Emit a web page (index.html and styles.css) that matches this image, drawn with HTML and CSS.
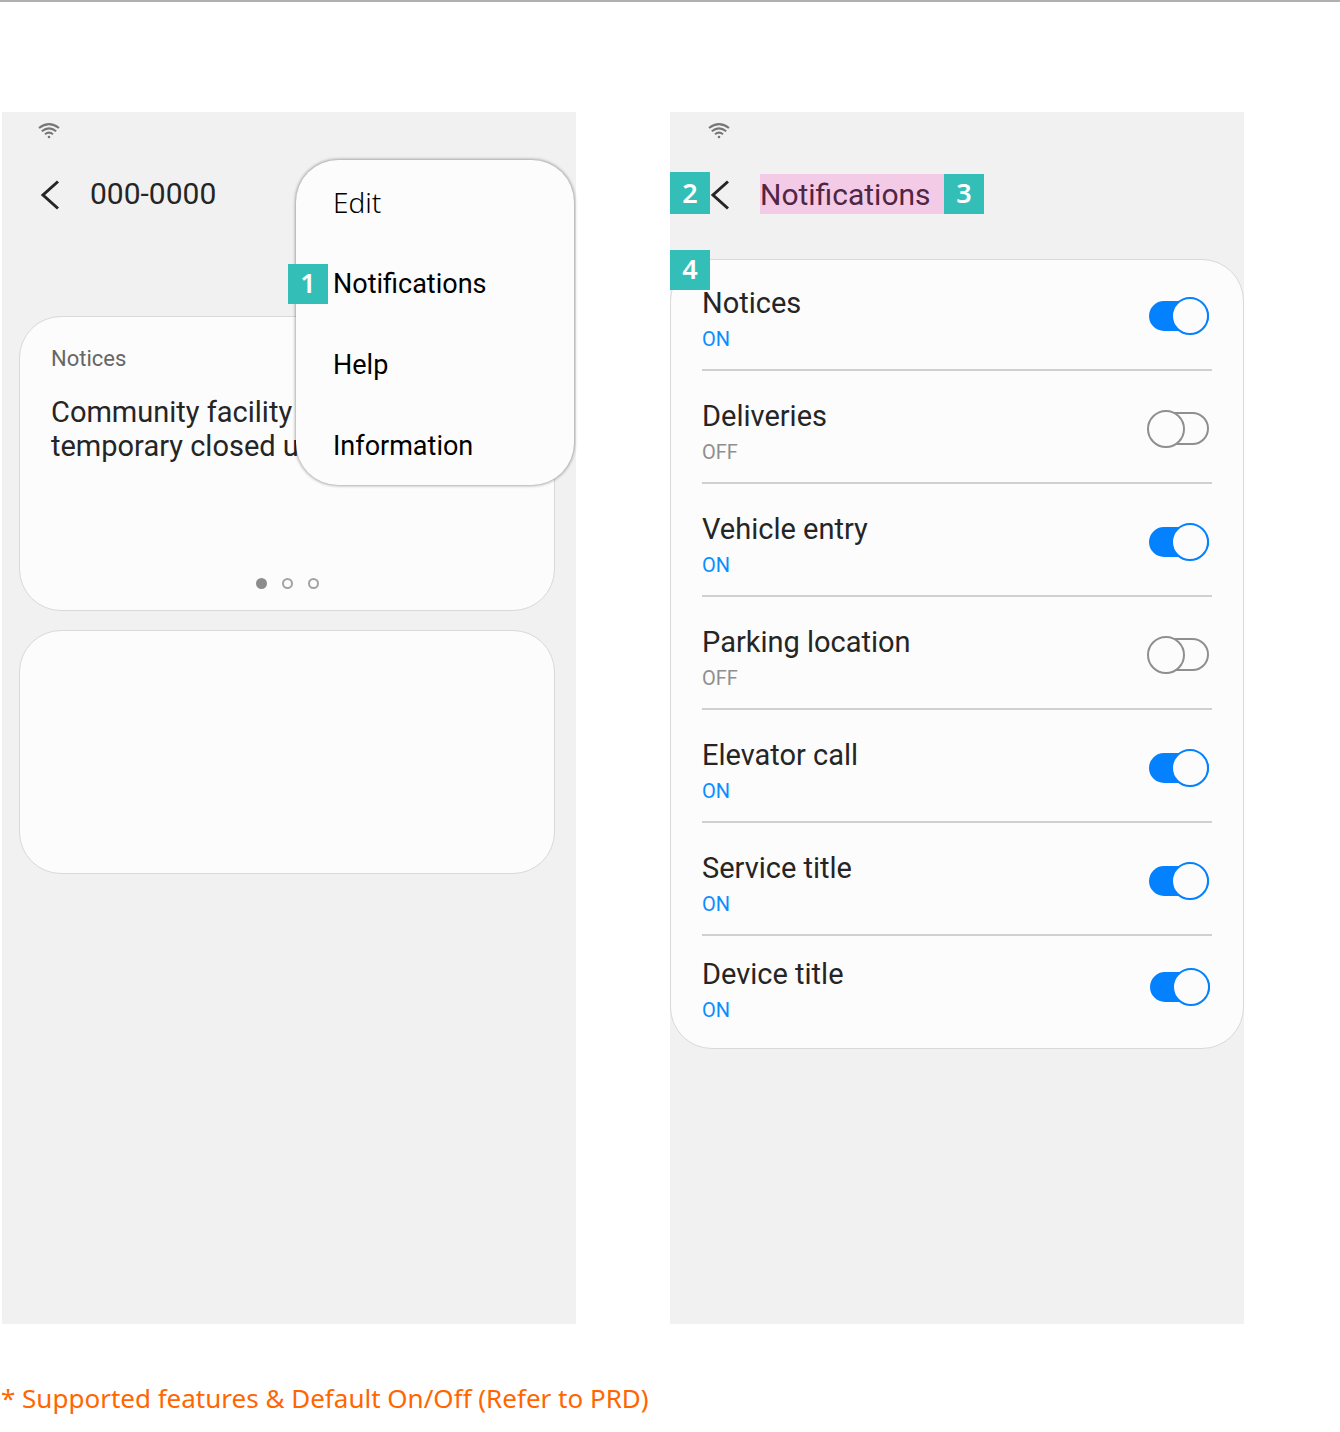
FILE: index.html
```html
<!DOCTYPE html>
<html lang="en">
<head>
<meta charset="utf-8">
<meta name="viewport" content="width=device-width, initial-scale=1">
<title>Notification settings</title>
<link rel="stylesheet" href="styles.css">
</head>
<body>
<main class="screens">
  <section class="phone" aria-label="Home menu">
    <div class="status">
      <svg class="wifi" viewBox="0 0 22 16" aria-hidden="true"><path d="M1 5Q11-2.8 21 5M3.8 8.2Q11 2.6 18.2 8.2M7 11.2Q11 8 15 11.2"/><circle cx="11" cy="14" r="1.3"/></svg>
    </div>
    <header class="appbar">
      <button class="back" type="button" aria-label="Back"><svg viewBox="0 0 20 30" aria-hidden="true"><path d="M19 1.5L4 15l15 13.5"/></svg></button>
      <h1 class="title">000-0000</h1>
    </header>
    <div class="cards">
      <article class="card card-notice">
        <h2 class="card-label">Notices</h2>
        <p class="card-text">Community facility<br>temporary closed u</p>
        <div class="dots"><span class="dot dot-current"></span><span class="dot"></span><span class="dot"></span></div>
      </article>
      <article class="card card-empty"></article>
    </div>
    <nav class="menu" aria-label="More options">
      <button class="menu-item menu-item-light" type="button">Edit</button>
      <button class="menu-item" type="button">Notifications<span class="badge badge-menu">1</span></button>
      <button class="menu-item" type="button">Help</button>
      <button class="menu-item" type="button">Information</button>
    </nav>
  </section>

  <section class="phone phone-settings" aria-label="Notifications">
    <div class="status">
      <svg class="wifi" viewBox="0 0 22 16" aria-hidden="true"><path d="M1 5Q11-2.8 21 5M3.8 8.2Q11 2.6 18.2 8.2M7 11.2Q11 8 15 11.2"/><circle cx="11" cy="14" r="1.3"/></svg>
    </div>
    <header class="appbar">
      <span class="badge badge-back">2</span>
      <button class="back" type="button" aria-label="Back"><svg viewBox="0 0 20 30" aria-hidden="true"><path d="M19 1.5L4 15l15 13.5"/></svg></button>
      <h1 class="title title-marked">Notifications</h1>
      <span class="badge">3</span>
    </header>
    <div class="settings">
      <span class="badge badge-list">4</span>
      <label class="row"><span class="row-text"><span class="row-name">Notices</span><span class="row-state on">ON</span></span><input class="switch" type="checkbox" checked></label>
      <label class="row"><span class="row-text"><span class="row-name">Deliveries</span><span class="row-state">OFF</span></span><input class="switch" type="checkbox"></label>
      <label class="row"><span class="row-text"><span class="row-name">Vehicle entry</span><span class="row-state on">ON</span></span><input class="switch" type="checkbox" checked></label>
      <label class="row"><span class="row-text"><span class="row-name">Parking location</span><span class="row-state">OFF</span></span><input class="switch" type="checkbox"></label>
      <label class="row"><span class="row-text"><span class="row-name">Elevator call</span><span class="row-state on">ON</span></span><input class="switch" type="checkbox" checked></label>
      <label class="row"><span class="row-text"><span class="row-name">Service title</span><span class="row-state on">ON</span></span><input class="switch" type="checkbox" checked></label>
      <label class="row"><span class="row-text"><span class="row-name">Device title</span><span class="row-state on">ON</span></span><input class="switch" type="checkbox" checked></label>
    </div>
  </section>
</main>
<p class="note">* Supported features &amp; Default On/Off (Refer to PRD)</p>
</body>
</html>
```
FILE: styles.css
```css
*, *::before, *::after { box-sizing: border-box; }

body {
  margin: 0;
  border-top: 2px solid #b0b0b0;
  background: #fff;
  color: #252525;
  font-family: Roboto, "Liberation Sans", sans-serif;
}

h1, h2, p { margin: 0; font-weight: 400; }

button {
  border: 0;
  padding: 0;
  background: none;
  color: inherit;
  font: inherit;
  text-align: left;
}

.screens {
  display: grid;
  grid-template-columns: 1fr 1fr;
  gap: 94px;
  padding: 110px 96px 0 2px;
}

.phone {
  position: relative;
  padding-bottom: 275px;
  background: #f1f1f1;
}

.status {
  height: 62px;
  padding: 11px 0 0 36px;
}

.wifi {
  display: block;
  width: 22px;
  height: 16px;
  fill: none;
  stroke: #777;
  stroke-width: 2;
}

.wifi circle { fill: #777; stroke: none; }

.appbar {
  position: relative;
  display: flex;
  align-items: center;
  height: 40px;
  padding-left: 37px;
}

.phone-settings .status { padding-left: 38px; }
.phone-settings .appbar { padding-left: 39px; }

.back {
  width: 20px;
  height: 30px;
  margin-top: 2px;
}

.back svg {
  display: block;
  width: 20px;
  height: 30px;
  fill: none;
  stroke: #252525;
  stroke-width: 3;
}

.title {
  margin-left: 31px;
  font-size: 30px;
  line-height: 42px;
}

.title-marked {
  width: 184px;
  height: 40px;
  background: #f4cbe6;
  color: #4f2644;
}

.badge {
  width: 40px;
  height: 40px;
  background: #33bfb8;
  color: #fff;
  font: 600 27px/38px "Noto Sans", sans-serif;
  text-align: center;
}

.badge-back { position: absolute; top: -2px; left: 0; height: 42px; line-height: 42px; }
.badge-menu { position: absolute; top: 23px; left: -8px; }
.badge-list { position: absolute; top: -10px; left: -1px; }

.cards {
  display: grid;
  gap: 19px;
  padding: 102px 21px 0 17px;
}

.card {
  border: 1px solid #d9d9d9;
  border-radius: 42px;
  background: #fcfcfc;
}

.card-notice {
  display: flex;
  flex-direction: column;
  min-height: 295px;
  padding: 26px 31px 21px;
}

.card-label {
  color: #666;
  font-size: 22px;
  line-height: 32px;
}

.card-text {
  margin-top: 20px;
  font-size: 29px;
  line-height: 34px;
}

.dots {
  display: flex;
  justify-content: center;
  gap: 15px;
  margin-top: auto;
}

.dot {
  width: 11px;
  height: 11px;
  border: 2px solid #a3a3a3;
  border-radius: 50%;
}

.dot-current { border-color: #8c8c8c; background: #8c8c8c; }

.card-empty { min-height: 244px; }

.menu {
  position: absolute;
  top: 48px;
  right: 2px;
  display: grid;
  width: 278px;
  padding-bottom: 1px;
  border-radius: 42px;
  background: #fcfcfc;
  box-shadow: 0 0 3px 1px rgba(0, 0, 0, .32);
}

.menu-item {
  position: relative;
  height: 81px;
  padding: 5px 0 0 37px;
  color: #000;
  font-size: 27px;
  line-height: 40px;
}

.menu-item-light {
  padding-top: 3px;
  font-family: "Noto Sans", sans-serif;
  font-size: 28px;
  font-weight: 300;
}

.settings {
  position: relative;
  margin-top: 45px;
  padding: 0 31px;
  border: 1px solid #d9d9d9;
  border-radius: 42px;
  background: #fcfcfc;
}

.row {
  display: flex;
  align-items: center;
  justify-content: space-between;
  padding: 27px 3px 12px 0;
  border-bottom: 2px solid #d0d0d0;
}

.row:first-of-type { padding-top: 25px; }
.row:last-of-type { padding: 20px 2px 20px 0; border-bottom: 0; }

.row-text { display: grid; }

.row-name { font-size: 29px; line-height: 36px; }

.row-state { color: #8f8f8f; font-size: 20px; line-height: 36px; }
.row-state.on { color: #0a8eff; }

.switch {
  appearance: none;
  display: grid;
  align-items: center;
  width: 62px;
  height: 38px;
  margin: 0 0 11px;
}

.switch::before,
.switch::after {
  content: "";
  grid-area: 1 / 1;
  border: 2px solid #8f8f8f;
  background: #fcfcfc;
}

.switch::before {
  width: 56px;
  height: 33px;
  margin-left: auto;
  border-radius: 17px;
}

.switch::after {
  width: 38px;
  height: 38px;
  border-radius: 50%;
}

.switch:checked::before {
  width: 60px;
  height: 30px;
  border-color: #0381fe;
  background: #0381fe;
}

.switch:checked::after {
  margin-left: auto;
  border-color: #0381fe;
}

.note {
  padding: 54px 0 14px 1px;
  color: #ff6600;
  font: 26px/40px "Noto Sans", sans-serif;
}
```
